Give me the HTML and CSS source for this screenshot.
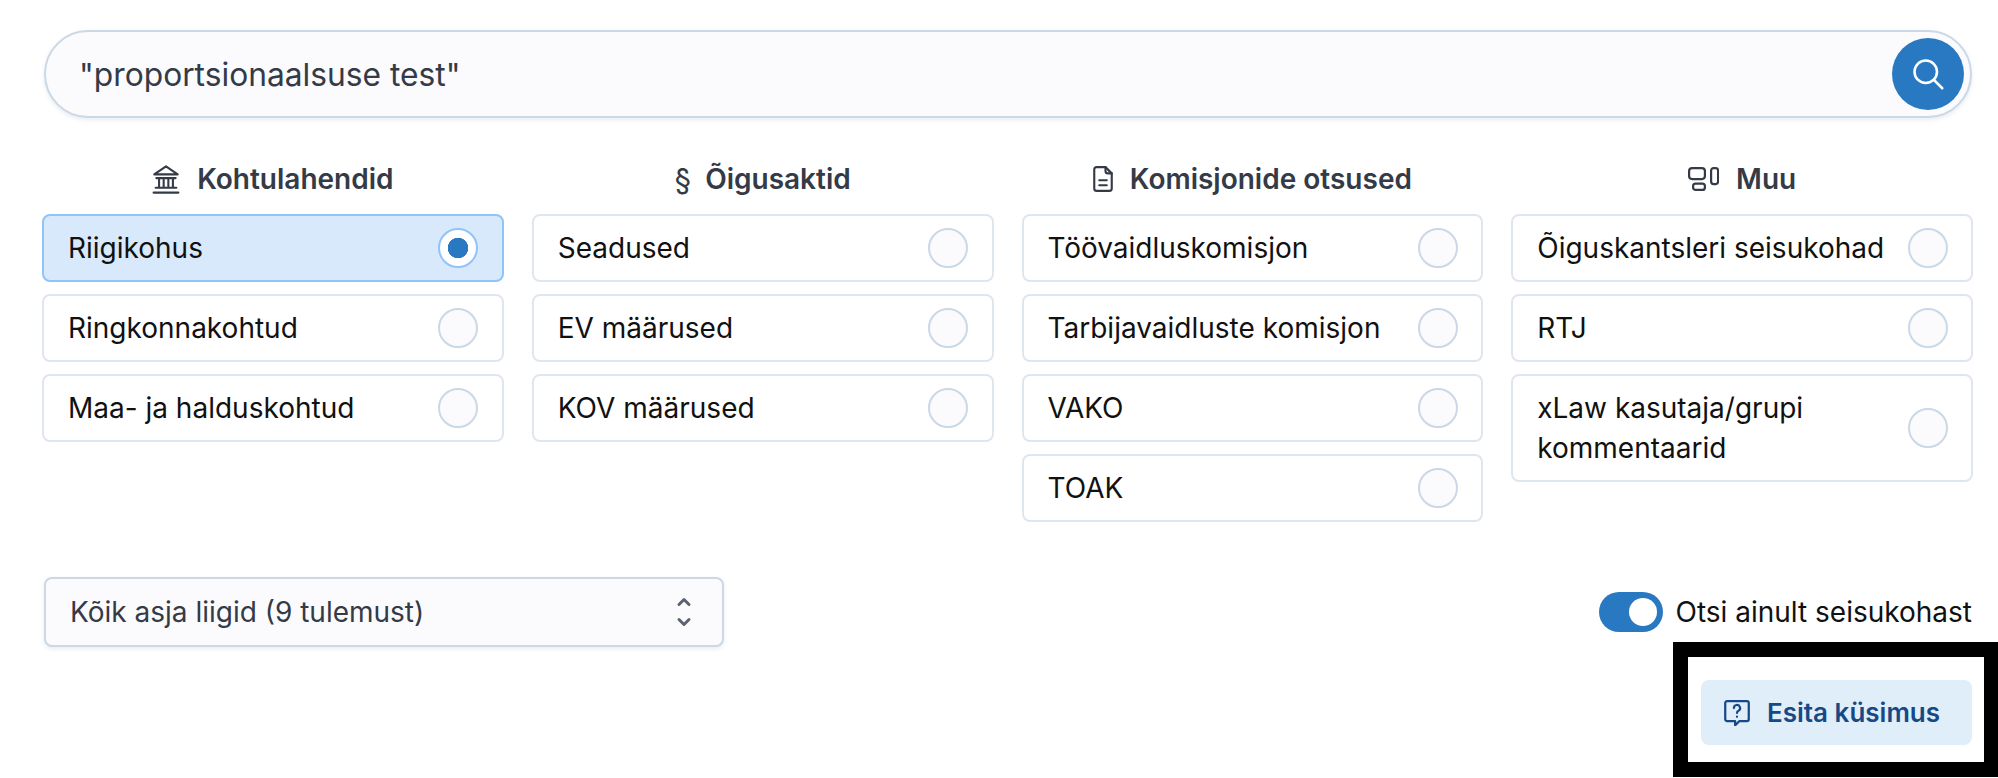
FILE: index.html
```html
<!DOCTYPE html>
<html lang="et">
<head>
    <meta charset="UTF-8">
    <meta name="viewport" content="width=device-width, initial-scale=1.0">
    <title>Otsing</title>
    <link rel="stylesheet" href="styles.css">
</head>
<body>
    <div class="page">
        <div class="search-bar">
            <span class="search-text">"proportsionaalsuse test"</span>
            <button class="search-btn" type="button">
                <svg width="36" height="36" viewBox="0 0 24 24" fill="none" stroke="currentColor" stroke-width="1.7" stroke-linecap="round">
                    <circle cx="10.5" cy="10.5" r="7.5"/>
                    <path d="M16 16L21.5 21.5"/>
                </svg>
            </button>
        </div>

        <div class="columns">
            <div class="column">
                <h3 class="column-title">
                    <svg width="28" height="29" viewBox="2 2 20 21" fill="none" stroke="currentColor" stroke-width="1.5" stroke-linecap="round" stroke-linejoin="round">
                        <path d="M3.5 8.8L12 3l8.5 5.8z"/>
                        <path d="M5 11.5h14M7 11.5v6M10.3 11.5v6M13.7 11.5v6M17 11.5v6M4.5 18.5h15M3 22h18"/>
                    </svg>
                    Kohtulahendid
                </h3>
                <div class="option selected"><span>Riigikohus</span><i class="radio"></i></div>
                <div class="option"><span>Ringkonnakohtud</span><i class="radio"></i></div>
                <div class="option"><span>Maa- ja halduskohtud</span><i class="radio"></i></div>
            </div>

            <div class="column">
                <h3 class="column-title">
                    <span class="title-glyph">§</span>
                    Õigusaktid
                </h3>
                <div class="option"><span>Seadused</span><i class="radio"></i></div>
                <div class="option"><span>EV määrused</span><i class="radio"></i></div>
                <div class="option"><span>KOV määrused</span><i class="radio"></i></div>
            </div>

            <div class="column">
                <h3 class="column-title">
                    <svg width="20" height="28" viewBox="4 1.5 16 21" fill="none" stroke="currentColor" stroke-width="1.7" stroke-linecap="round" stroke-linejoin="round">
                        <path d="M14 2.5H7a2 2 0 0 0-2 2v15a2 2 0 0 0 2 2h10a2 2 0 0 0 2-2V7.5z"/>
                        <path d="M14 2.5v3a2 2 0 0 0 2 2h3M9 13h6M9 17h6"/>
                    </svg>
                    Komisjonide otsused
                </h3>
                <div class="option"><span>Töövaidluskomisjon</span><i class="radio"></i></div>
                <div class="option"><span>Tarbijavaidluste komisjon</span><i class="radio"></i></div>
                <div class="option"><span>VAKO</span><i class="radio"></i></div>
                <div class="option"><span>TOAK</span><i class="radio"></i></div>
            </div>

            <div class="column">
                <h3 class="column-title">
                    <svg width="31" height="24" viewBox="0 0 31 24" fill="none" stroke="currentColor" stroke-width="2.2">
                        <rect x="1.1" y="1.1" width="15.8" height="11" rx="3"/>
                        <rect x="5.1" y="16.6" width="11.8" height="6.3" rx="2.5"/>
                        <rect x="23.1" y="1.1" width="7" height="16" rx="2.5"/>
                    </svg>
                    Muu
                </h3>
                <div class="option"><span>Õiguskantsleri seisukohad</span><i class="radio"></i></div>
                <div class="option"><span>RTJ</span><i class="radio"></i></div>
                <div class="option"><span>xLaw kasutaja/grupi kommentaarid</span><i class="radio"></i></div>
            </div>
        </div>

        <div class="filters">
            <div class="select-box">
                <span>Kõik asja liigid (9 tulemust)</span>
                <svg width="24" height="34" viewBox="0 0 24 34" fill="none" stroke="currentColor" stroke-width="3" stroke-linecap="round" stroke-linejoin="round">
                    <path d="M7 9.5l5-5 5 5M7 24.5l5 5 5-5"/>
                </svg>
            </div>
            <label class="toggle-row">
                <span class="toggle"><i class="toggle-knob"></i></span>
                Otsi ainult seisukohast
            </label>
        </div>

        <div class="actions">
            <div class="highlight">
                <button class="ask-btn" type="button">
                    <svg width="26" height="26" viewBox="1.5 1.5 21 21" fill="none" stroke="currentColor" stroke-width="1.8" stroke-linecap="round" stroke-linejoin="round">
                        <path d="M4 2.5h16a1.5 1.5 0 0 1 1.5 1.5v13a1.5 1.5 0 0 1-1.5 1.5h-6l-3.5 3.5v-3.5H4A1.5 1.5 0 0 1 2.5 17V4A1.5 1.5 0 0 1 4 2.5z"/>
                        <path d="M9.5 8a2.5 2.5 0 1 1 3.7 2.2c-.8.4-1.2 1-1.2 1.8M12 15v.1"/>
                    </svg>
                    Esita küsimus
                </button>
            </div>
        </div>
    </div>
</body>
</html>
```

FILE: styles.css
```css
* {
    box-sizing: border-box;
}

body {
    font-family: Inter, "Liberation Sans", sans-serif;
    margin: 0;
    padding: 0;
    background-color: #fff;
    color: #111;
}

.page {
    padding: 30px 25px 0 42px;
    height: 778px;
    overflow: hidden;
}

.search-bar {
    display: flex;
    align-items: center;
    justify-content: space-between;
    height: 88px;
    margin: 0 1px 0 2px;
    padding: 0 6px 0 33px;
    background-color: #fbfbfe;
    border: 2px solid #cbd8e6;
    border-radius: 44px;
    box-shadow: 0 2px 4px rgba(40, 70, 110, 0.1);
}

.search-text {
    font-size: 31.75px;
    color: #343a46;
}

.search-btn {
    display: flex;
    align-items: center;
    justify-content: center;
    width: 72px;
    height: 72px;
    padding: 0;
    background-color: #2979c2;
    color: #fff;
    border: none;
    border-radius: 50%;
}

.columns {
    display: grid;
    grid-template-columns: repeat(4, 1fr);
    gap: 28px;
    margin-top: 41px;
    height: 418px;
}

.column {
    display: flex;
    flex-direction: column;
    gap: 12px;
}

.column-title {
    display: flex;
    align-items: center;
    justify-content: center;
    gap: 17px;
    height: 40px;
    margin: 0 0 3px;
    font-size: 28px;
    font-weight: 600;
    color: #343a46;
}

.title-glyph {
    margin-right: -3px;
    font-size: 30px;
    font-weight: 400;
}

.option {
    display: flex;
    align-items: center;
    justify-content: space-between;
    gap: 20px;
    min-height: 68px;
    padding: 12px 23.5px 12px 24px;
    background-color: #fff;
    border: 2px solid #e0e6f0;
    border-radius: 8px;
    font-size: 28px;
    line-height: 40px;
}

.option.selected {
    background-color: #d9e9fc;
    border-color: #90c4f9;
}

.radio {
    flex: none;
    width: 40px;
    height: 40px;
    background-color: #fbfbfe;
    border: 2px solid #cbd8e6;
    border-radius: 50%;
}

.selected .radio {
    background: radial-gradient(circle, #2979c2 0, #2979c2 10px, #fff 10.5px);
    border-color: #90c4f9;
}

.filters {
    display: flex;
    align-items: center;
    justify-content: space-between;
    height: 70px;
}

.select-box {
    display: flex;
    align-items: center;
    justify-content: space-between;
    width: 680px;
    height: 70px;
    margin-left: 2px;
    padding: 0 26px 0 24px;
    background-color: #fbfbfe;
    border: 2px solid #cbd8e6;
    border-radius: 8px;
    box-shadow: 0 2px 4px rgba(40, 70, 110, 0.1);
    font-size: 28px;
    color: #343a46;
}

.select-box svg {
    color: #5c6370;
}

.toggle-row {
    display: flex;
    align-items: center;
    gap: 12px;
    margin-right: 1px;
    font-size: 28px;
}

.toggle {
    display: flex;
    align-items: center;
    justify-content: flex-end;
    width: 64px;
    height: 40px;
    padding-right: 6px;
    background-color: #2979c2;
    border-radius: 20px;
}

.toggle-knob {
    width: 28px;
    height: 28px;
    background-color: #fff;
    border-radius: 50%;
}

.actions {
    display: flex;
    justify-content: flex-end;
    margin-top: -5px;
}

.highlight {
    width: 325px;
    height: 135px;
    margin-right: -25px;
    padding: 23px 12px 0 13px;
    background-color: #fff;
    border: 15px solid #000;
    border-right-width: 14px;
}

.ask-btn {
    display: flex;
    align-items: center;
    justify-content: center;
    gap: 17px;
    width: 271px;
    height: 65px;
    padding: 0 9px 0 0;
    background-color: #e0eefa;
    color: #174a85;
    border: none;
    border-radius: 8px;
    font-family: inherit;
    font-size: 26px;
    font-weight: 600;
}
```
